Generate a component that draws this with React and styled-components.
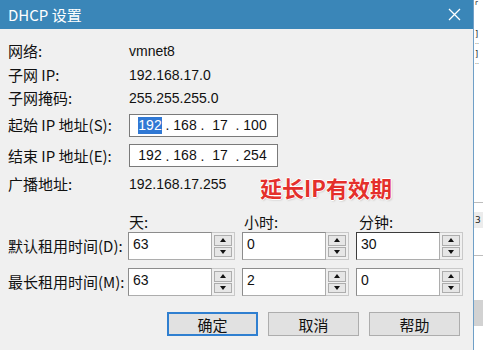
import styled, { createGlobalStyle, css } from "styled-components";

const GlobalStyle = createGlobalStyle`
  html, body { margin: 0; padding: 0; }
  body {
    width: 483px;
    height: 350px;
    overflow: hidden;
    background: #ffffff;
    font-family: "Noto Sans CJK SC", "Noto Sans", sans-serif;
  }
`;

const Page = styled.div`
  display: flex;
  width: 483px;
  height: 350px;
`;

const Dialog = styled.div`
  width: 473px;
  height: 350px;
  border-right: 1px solid #6f9fc7;
  background: #f0f0f0;
  display: flex;
  flex-direction: column;
`;

const TitleBar = styled.div`
  height: 29px;
  background: #3a86b8;
  display: flex;
  align-items: center;
  justify-content: space-between;
  padding: 0 12px 0 8px;
  color: #fff;
  font-size: 15px;
`;

const Body = styled.div`
  display: flex;
  flex-direction: column;
  padding: 10px 0 0 8px;
`;

const Row = styled.div`
  display: flex;
  align-items: center;
  height: ${(p) => p.h}px;
`;

const Label = styled.div`
  width: ${(p) => p.w || 121}px;
  flex-shrink: 0;
  font-size: 15px;
  color: #111;
  white-space: nowrap;
  line-height: 18px;
`;

const Value = styled.div`
  font-family: "Liberation Sans", Arial, sans-serif;
  font-size: 14px;
  color: #111;
  width: ${(p) => (p.w ? p.w + "px" : "auto")};
`;

const IpField = styled.div`
  width: 139px;
  height: 21px;
  border: 1px solid #7a7a7a;
  background: #fff;
  display: flex;
  align-items: center;
  padding-left: 8px;
  font-family: "Liberation Sans", Arial, sans-serif;
  font-size: 14px;
  color: #111;
`;

const Octet = styled.span`
  width: 24px;
  text-align: center;
  line-height: 17px;
  ${(p) =>
    p.selected &&
    css`
      background: #3078d4;
      color: #fff;
    `}
`;

const Dot = styled.span`
  width: 11px;
  text-align: center;
`;

const Note = styled.div`
  font-size: 22px;
  font-weight: 700;
  color: #e4302b;
  margin-top: 5px;
  white-space: nowrap;
  text-shadow: 1px 0 0 #fff, -1px 0 0 #fff, 0 1px 0 #fff, 0 -1px 0 #fff,
    1px 1px 2px rgba(0, 0, 0, 0.25);
`;

const Heads = styled.div`
  display: flex;
  gap: 7px;
  font-size: 15px;
  color: #111;
`;

const Head = styled.div`
  width: 107px;
  padding-left: 1px;
`;

const Spins = styled.div`
  display: flex;
  gap: 7px;
`;

const Spin = styled.div`
  display: flex;
  width: 107px;
  height: 28px;
`;

const SpinText = styled.div`
  flex: 1;
  background: #fff;
  border: 1px solid #adadad;
  border-top-color: ${(p) => (p.focused ? "#3c3c3c" : "#8c8c8c")};
  border-left-color: ${(p) => (p.focused ? "#3c3c3c" : "#8c8c8c")};
  padding: 3px 0 0 4px;
  font-family: "Liberation Sans", Arial, sans-serif;
  font-size: 14px;
  line-height: 17px;
  color: #111;
`;

const SpinButtons = styled.div`
  width: 18px;
  border: 1px solid #c9c9c9;
  border-left: none;
  padding: 2px;
  display: flex;
  flex-direction: column;
  gap: 1px;
`;

const Arrow = styled.div`
  flex: 1;
  border: 1px solid #adadad;
  background: #e6e6e6;
  display: flex;
  align-items: center;
  justify-content: center;
  &::after {
    content: "";
    border-left: 3.5px solid transparent;
    border-right: 3.5px solid transparent;
    ${(p) =>
      p.down
        ? css`border-top: 4px solid #111;`
        : css`border-bottom: 4px solid #111;`}
  }
`;

const Buttons = styled.div`
  display: flex;
  justify-content: flex-end;
  gap: 10px;
  padding-right: 13px;
  margin-top: 16px;
`;

const Button = styled.div`
  width: 91px;
  height: 24px;
  box-sizing: border-box;
  background: #e1e1e1;
  border: ${(p) => (p.primary ? "2px solid #2f7fd0" : "1px solid #adadad")};
  display: flex;
  align-items: center;
  justify-content: center;
  font-size: 15px;
  color: #111;
`;

const Backdrop = styled.div`
  flex: 1;
  overflow: hidden;
  display: flex;
  flex-direction: column;
  background: #fff;
  color: #222;
  font-family: "DejaVu Sans", sans-serif;
`;

const Frag = styled.div`
  height: ${(p) => p.h}px;
  line-height: ${(p) => p.h}px;
  font-size: ${(p) => p.size || 8}px;
  background: ${(p) => p.bg || "transparent"};
  border-top: ${(p) => (p.line ? "1px solid #bdbdbd" : "none")};
  padding-left: 1px;
  white-space: nowrap;
`;

function SpinBox({ value, focused }) {
  return (
    <Spin>
      <SpinText focused={focused}>{value}</SpinText>
      <SpinButtons>
        <Arrow />
        <Arrow down />
      </SpinButtons>
    </Spin>
  );
}

function IpInput({ octets, selectFirst }) {
  return (
    <IpField>
      {octets.map((o, i) => (
        <span key={i} style={{ display: "contents" }}>
          {i > 0 && <Dot>.</Dot>}
          <Octet selected={selectFirst && i === 0}>{o}</Octet>
        </span>
      ))}
    </IpField>
  );
}

export default function App() {
  return (
    <Page>
      <GlobalStyle />
      <Dialog>
        <TitleBar>
          <span>DHCP 设置</span>
          <svg width="13" height="13" viewBox="0 0 13 13">
            <path d="M1 1 L12 12 M12 1 L1 12" stroke="#fff" strokeWidth="1.3" />
          </svg>
        </TitleBar>
        <Body>
          <Row h={24}>
            <Label>网络:</Label>
            <Value>vmnet8</Value>
          </Row>
          <Row h={23}>
            <Label>子网 IP:</Label>
            <Value>192.168.17.0</Value>
          </Row>
          <Row h={24}>
            <Label>子网掩码:</Label>
            <Value>255.255.255.0</Value>
          </Row>
          <Row h={30}>
            <Label>起始 IP 地址(S):</Label>
            <IpInput octets={["192", "168", "17", "100"]} selectFirst />
          </Row>
          <Row h={31}>
            <Label>结束 IP 地址(E):</Label>
            <IpInput octets={["192", "168", "17", "254"]} />
          </Row>
          <Row h={26}>
            <Label>广播地址:</Label>
            <Value w={131}>192.168.17.255</Value>
            <Note>延长IP有效期</Note>
          </Row>
          <Row h={22} style={{ marginTop: 13 }}>
            <Label w={120} />
            <Heads>
              <Head>天:</Head>
              <Head>小时:</Head>
              <Head>分钟:</Head>
            </Heads>
          </Row>
          <Row h={28}>
            <Label w={120}>默认租用时间(D):</Label>
            <Spins>
              <SpinBox value="63" />
              <SpinBox value="0" />
              <SpinBox value="30" focused />
            </Spins>
          </Row>
          <Row h={28} style={{ marginTop: 8 }}>
            <Label w={120}>最长租用时间(M):</Label>
            <Spins>
              <SpinBox value="63" />
              <SpinBox value="2" />
              <SpinBox value="0" />
            </Spins>
          </Row>
          <Buttons>
            <Button primary>确定</Button>
            <Button>取消</Button>
            <Button>帮助</Button>
          </Buttons>
        </Body>
      </Dialog>
      <Backdrop>
        <Frag h={7} size={7}>r</Frag>
        <Frag h={24} />
        <Frag h={7} size={8}>]</Frag>
        <Frag h={7} size={6}>..</Frag>
        <Frag h={6} />
        <Frag h={7} size={8}>]</Frag>
        <Frag h={7} size={6}>..</Frag>
        <Frag h={138} />
        <Frag h={9} line />
        <Frag h={16} size={9} bg="#ececec">3</Frag>
        <Frag h={27} />
        <Frag h={44} line />
        <Frag h={26} bg="#d2d2d2" />
        <Frag h={24} />
      </Backdrop>
    </Page>
  );
}
